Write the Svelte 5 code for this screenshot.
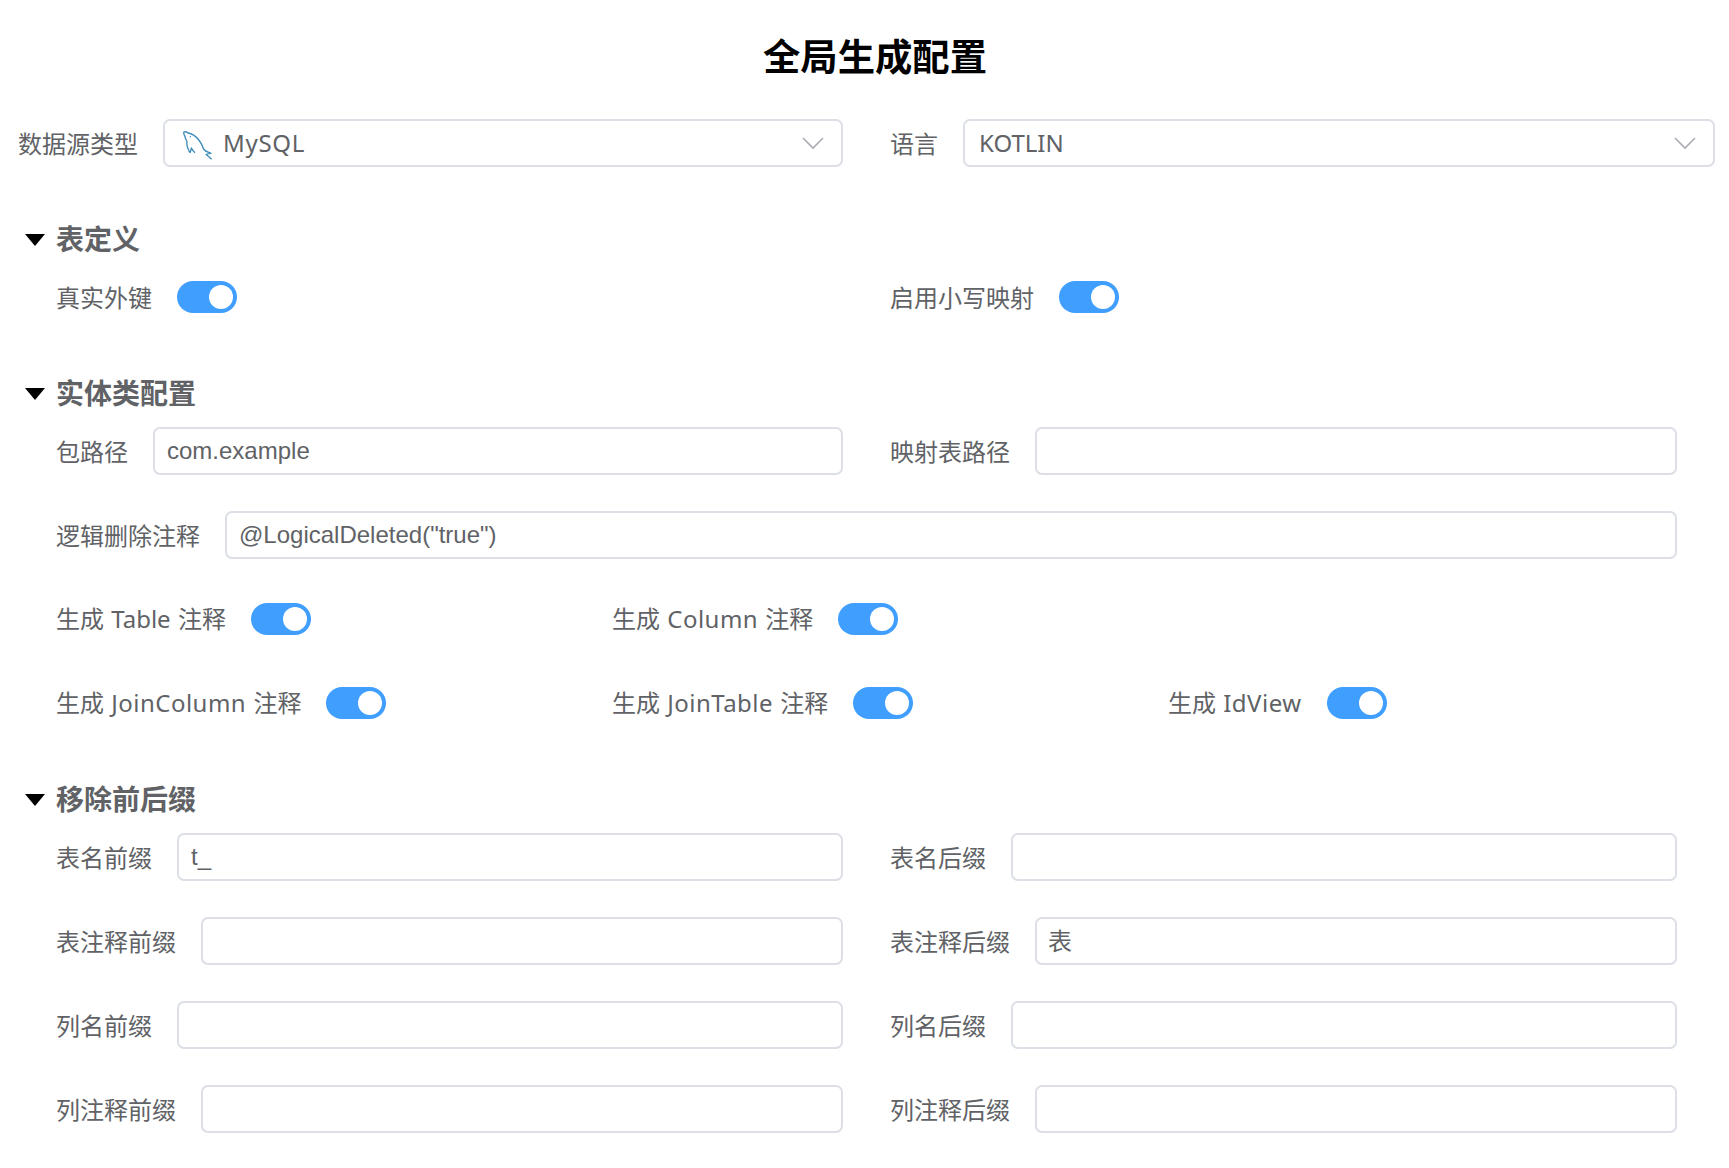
<script lang="ts">
  type Field = { label: string; kind: 'text' | 'switch'; value?: string; span: number };
  type Section = { title: string; fields: Field[] };

  const text = (label: string, value = '', span = 3): Field => ({ label, kind: 'text', value, span });
  const toggle = (label: string, span = 2): Field => ({ label, kind: 'switch', span });
  const isLatin = (value = '') => /[A-Za-z]/.test(value);
  const isHan = (value = '') => /[\u4e00-\u9fff]/.test(value);
  // Keeps Latin words as separate pieces so they can be tracked on their own.
  const pieces = (label: string) => label.split(/([A-Za-z]+)/).filter(Boolean);

  const sections: Section[] = [
    { title: '表定义', fields: [toggle('真实外键', 3), toggle('启用小写映射', 3)] },
    {
      title: '实体类配置',
      fields: [
        text('包路径', 'com.example'),
        text('映射表路径'),
        text('逻辑删除注释', '@LogicalDeleted("true")', 6),
        toggle('生成 Table 注释'),
        toggle('生成 Column 注释', 4),
        toggle('生成 JoinColumn 注释'),
        toggle('生成 JoinTable 注释'),
        toggle('生成 IdView')
      ]
    },
    {
      title: '移除前后缀',
      fields: [
        text('表名前缀', 't_'),
        text('表名后缀'),
        text('表注释前缀'),
        text('表注释后缀', '表'),
        text('列名前缀'),
        text('列名后缀'),
        text('列注释前缀'),
        text('列注释后缀')
      ]
    }
  ];
</script>

{#snippet chevron()}
  <svg class="chevron" viewBox="0 0 22 14" aria-hidden="true"><path d="M1 2 L11 12 L21 2" /></svg>
{/snippet}

<main>
  <h1>全局生成配置</h1>

  <div class="top">
    <div class="field">
      <span class="label han">数据源类型</span>
      <div class="box select">
        <svg class="dolphin" viewBox="0 0 30 30" aria-hidden="true">
          <path d="M5.6 19.6 L4.7 18.2 Q3.5 14 4 11.5 Q2.5 9 1.8 6 Q.1 3 1 2.1 Q2.6 1 5 3 Q11 4 15.5 9.5 Q19 14 20.5 19 Q22 21.2 25.8 22.3 L28 23.3 Q24.5 23.5 23.2 24.5 Q26 26.8 28.6 29.3" />
          <path d="M5.6 19.6 Q5.9 21.7 7.2 22.5 L8.4 18 Q9.5 20.5 12 22.8" />
          <path d="M7 6.2 L7.7 7" />
        </svg>
        <span class="picked tracked">MySQL</span>
        {@render chevron()}
      </div>
    </div>
    <div class="field">
      <span class="label han">语言</span>
      <div class="box select">
        <span class="picked">KOTLIN</span>
        {@render chevron()}
      </div>
    </div>
  </div>

  {#each sections as section}
    <section>
      <h2><i class="caret"></i><span class="heading">{section.title}</span></h2>
      <div class="grid">
        {#each section.fields as field}
          <div class="field" class:third={field.span === 2} class:half={field.span === 3} class:wide={field.span === 4} class:full={field.span === 6}>
            <span class="label" class:han={!isLatin(field.label)}>{#each pieces(field.label) as piece}<span class:word={isLatin(piece)} class:short={piece === 'Table'}>{piece}</span>{/each}</span>
            {#if field.kind === 'switch'}
              <button class="switch" type="button" role="switch" aria-checked="true" aria-label={field.label}><i class="knob"></i></button>
            {:else}
              <input class="box" class:hanvalue={isHan(field.value)} type="text" value={field.value} aria-label={field.label} />
            {/if}
          </div>
        {/each}
      </div>
    </section>
  {/each}
</main>

<style>
  :global(body) {
    background: #fff;
  }
  main {
    box-sizing: border-box;
    min-height: 1168px;
    padding: 29px 14px 36px 19px;
    color: #606266;
    font-family: 'Noto Sans', 'Noto Sans CJK SC', sans-serif;
    font-size: 24px;
  }
  h1 {
    margin: 0 0 34px;
    padding-left: 16px;
    height: 56px;
    line-height: 56px;
    text-align: center;
    color: #000;
    font-size: 37.33px;
    font-weight: 700;
  }
  .top {
    display: grid;
    grid-template-columns: 1fr 1fr;
    column-gap: 48px;
  }
  section {
    padding: 0 38px;
  }
  h2 {
    display: flex;
    align-items: center;
    margin: 53px 0 13px -32px;
    height: 40px;
    font-size: 28px;
    font-weight: 700;
    line-height: 40px;
  }
  .heading {
    margin-left: -1px;
    padding-bottom: 2px;
  }
  .caret {
    width: 20px;
    height: 12px;
    margin-right: 12px;
    background: #000;
    clip-path: polygon(0 0, 100% 0, 50% 100%);
  }
  .grid {
    display: grid;
    grid-template-columns: repeat(6, 1fr);
    gap: 36px 48px;
  }
  .third { grid-column: span 2; }
  .half { grid-column: span 3; }
  .wide { grid-column: span 4; }
  .full { grid-column: span 6; }
  .field {
    display: flex;
    align-items: center;
    gap: 24px;
    height: 48px;
    min-width: 0;
  }
  .label {
    flex: none;
    margin-left: -1px;
    padding-right: 1px;
    line-height: 46px;
    white-space: pre;
    word-spacing: 1px;
  }
  .han {
    padding-top: 2px;
  }
  .word {
    letter-spacing: 0.48px;
  }
  .short {
    letter-spacing: 0;
  }
  .box {
    box-sizing: border-box;
    flex: 1;
    min-width: 0;
    height: 48px;
    margin: 0;
    padding: 0 12px;
    border: 2px solid #dcdfe6;
    border-radius: 7px;
    background: #fff;
    color: #606266;
    font-family: 'Liberation Sans', 'Noto Sans CJK SC', sans-serif;
    font-size: 24px;
    outline: none;
  }
  .hanvalue {
    padding: 0 12px 4px 11px;
  }
  .select {
    display: flex;
    align-items: center;
    padding: 0 17px 0 14px;
    font-family: 'Noto Sans', 'Noto Sans CJK SC', sans-serif;
  }
  .picked {
    flex: 1;
    line-height: 44px;
  }
  .tracked {
    letter-spacing: 0.7px;
  }
  .dolphin {
    width: 30px;
    height: 30px;
    margin: 4px 10px 0 4px;
    fill: none;
    stroke: #3f8dbb;
    stroke-width: 1.35;
    stroke-linejoin: round;
  }
  .chevron {
    width: 22px;
    height: 14px;
    fill: none;
    stroke: #a8abb2;
    stroke-width: 1.6;
  }
  .switch {
    display: flex;
    align-items: center;
    justify-content: flex-end;
    width: 60px;
    height: 32px;
    padding: 4px;
    border: 0;
    border-radius: 16px;
    background: #409eff;
  }
  .knob {
    width: 24px;
    height: 24px;
    border-radius: 50%;
    background: #fff;
  }
</style>
